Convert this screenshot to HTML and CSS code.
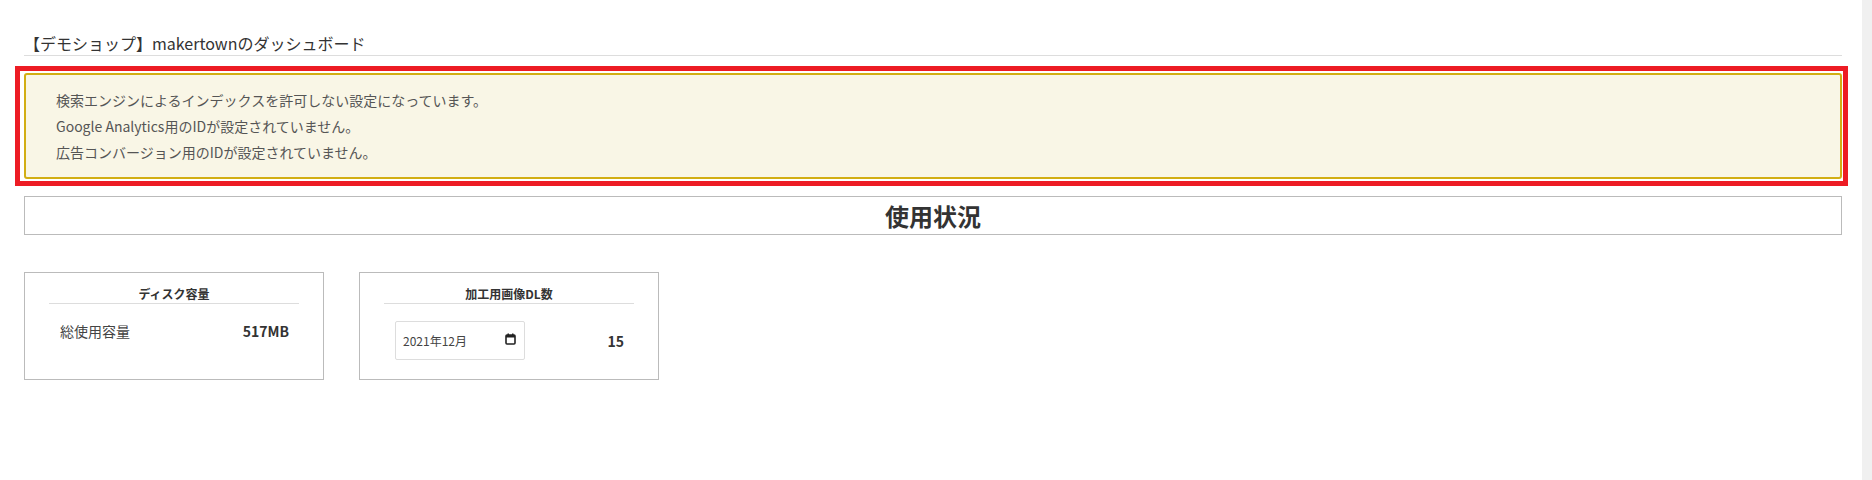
FILE: index.html
```html
<!DOCTYPE html>
<html lang="ja">
<head>
    <meta charset="UTF-8">
    <meta name="viewport" content="width=device-width, initial-scale=1.0">
    <title>ダッシュボード</title>
    <link rel="stylesheet" href="styles.css">
</head>
<body>
    <div class="page">
        <h1 class="page-title">【デモショップ】makertownのダッシュボード</h1>

        <div class="notice">
            <p>検索エンジンによるインデックスを許可しない設定になっています。</p>
            <p>Google Analytics用のIDが設定されていません。</p>
            <p>広告コンバージョン用のIDが設定されていません。</p>
        </div>

        <h2 class="section-title">使用状況</h2>

        <div class="usage-cards">
            <div class="usage-card">
                <h3 class="usage-card-title">ディスク容量</h3>
                <div class="usage-row">
                    <span class="usage-label">総使用容量</span>
                    <strong class="usage-value">517MB</strong>
                </div>
            </div>
            <div class="usage-card">
                <h3 class="usage-card-title">加工用画像DL数</h3>
                <div class="usage-row">
                    <div class="month-input">
                        <span>2021年12月</span>
                        <svg class="calendar-icon" width="11" height="12" viewBox="0 0 11 12">
                            <rect x="1" y="2" width="9" height="9" rx="1" fill="none" stroke="#222" stroke-width="1.6"/>
                            <rect x="1" y="2" width="9" height="2.5" fill="#222"/>
                            <rect x="2.5" y="0.5" width="1.5" height="2" fill="#222"/>
                            <rect x="7" y="0.5" width="1.5" height="2" fill="#222"/>
                        </svg>
                    </div>
                    <strong class="usage-value">15</strong>
                </div>
            </div>
        </div>
    </div>

    <div class="scroll-track"></div>
</body>
</html>
```

FILE: styles.css
```css
:root {
    --text-color: #333;
    --muted-color: #555;
    --line-color: #ddd;
    --box-border: #bbb;
}

* {
    margin: 0;
    padding: 0;
    box-sizing: border-box;
    font-family: 'Noto Sans CJK JP', 'Noto Sans', sans-serif;
}

body {
    background: #fff;
    color: var(--text-color);
}

.page {
    padding: 31px 30px 0 24px;
}

.page-title {
    font-size: 16px;
    font-weight: normal;
    line-height: 24px;
    border-bottom: 1px solid var(--line-color);
    color: #333;
}

/* 警告メッセージ */
.notice {
    position: relative;
    margin-top: 17px;
    padding: 12px 30px;
    background: #f9f6e6;
    border: 2px solid #d2ae14;
    border-radius: 3px;
    color: var(--muted-color);
    font-size: 14px;
    line-height: 26px;
}

/* 赤枠のハイライト */
.notice::after {
    content: "";
    position: absolute;
    top: -9px;
    right: -8px;
    bottom: -9px;
    left: -11px;
    border: 5px solid #ed1c24;
    pointer-events: none;
}

.section-title {
    margin-top: 17px;
    border: 1px solid var(--box-border);
    text-align: center;
    font-size: 24px;
    font-weight: bold;
    line-height: 37px;
    color: #333;
}

.usage-cards {
    display: flex;
    gap: 35px;
    margin-top: 37px;
}

.usage-card {
    width: 300px;
    height: 108px;
    padding: 12px 24px;
    border: 1px solid var(--box-border);
}

.usage-card-title {
    font-size: 12px;
    font-weight: bold;
    line-height: 18px;
    text-align: center;
    border-bottom: 1px solid var(--line-color);
    color: #333;
}

.usage-row {
    display: flex;
    justify-content: space-between;
    align-items: center;
    margin-top: 17px;
    padding: 0 10px 0 11px;
    font-size: 14px;
    line-height: 20px;
}

.usage-label {
    color: #444;
}

.usage-value {
    font-weight: bold;
    color: #333;
}

.month-input {
    display: flex;
    align-items: center;
    justify-content: space-between;
    width: 130px;
    height: 39px;
    padding: 0 8px 0 7px;
    border: 1px solid var(--line-color);
    border-radius: 2px;
    font-size: 12px;
    color: #444;
}

.calendar-icon {
    margin-top: -4px;
}

.scroll-track {
    position: fixed;
    top: 0;
    right: 0;
    bottom: 0;
    width: 10px;
    background: #f0f0f0;
}
```
